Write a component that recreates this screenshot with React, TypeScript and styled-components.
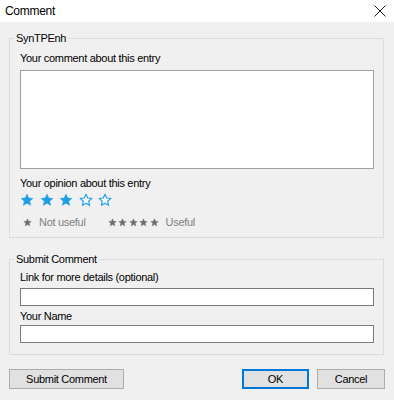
import React from 'react';
import styled, {createGlobalStyle} from 'styled-components';

const GlobalStyle = createGlobalStyle`
  html, body {
    margin: 0;
    padding: 0;
    background: #f0f0f0;
  }
`

const STAR = 'M12 2l2.9 6.6 7.1.7-5.4 4.8 1.6 7-6.2-3.7-6.2 3.7 1.6-7L2 9.3l7.1-.7z'

type StarProps = {
    filled?: boolean
    size: number
    color: string
}
const Star = ({filled, size, color}: StarProps) => (
    <svg width={size} height={size} viewBox="0 0 24 24">
        <path d={STAR} fill={filled ? color : '#ffffff'} stroke={color} strokeWidth={filled ? 1 : 2}
              strokeLinejoin="round"/>
    </svg>
)

export default function App() {
    const rating = 3
    return (
        <Window>
            <GlobalStyle/>
            <TitleBar>
                <Title>Comment</Title>
                <svg width="12" height="12" viewBox="0 0 12 12">
                    <path d="M0.5 0.5L11.5 11.5M11.5 0.5L0.5 11.5" stroke="#1a1a1a" strokeWidth="1"/>
                </svg>
            </TitleBar>
            <Body>
                <Group>
                    <Legend>SynTPEnh</Legend>
                    <Label>Your comment about this entry</Label>
                    <CommentArea/>
                    <Label top={8}>Your opinion about this entry</Label>
                    <StarRow>
                        {[1, 2, 3, 4, 5].map(i => (
                            <Star key={i} filled={i <= rating} size={14} color={'#1e9ee2'}/>
                        ))}
                    </StarRow>
                    <Scale>
                        <Star filled size={9} color={'#6e6e6e'}/>
                        <ScaleText>Not useful</ScaleText>
                        <SmallStars>
                            {[1, 2, 3, 4, 5].map(i => <Star key={i} filled size={9} color={'#6e6e6e'}/>)}
                        </SmallStars>
                        <ScaleText>Useful</ScaleText>
                    </Scale>
                </Group>
                <Group second>
                    <Legend>Submit Comment</Legend>
                    <Label>Link for more details (optional)</Label>
                    <TextInput/>
                    <Label top={4}>Your Name</Label>
                    <TextInput name/>
                </Group>
                <Buttons>
                    <Button width={115}>Submit Comment</Button>
                    <RightButtons>
                        <Button width={67} primary>OK</Button>
                        <Button width={68}>Cancel</Button>
                    </RightButtons>
                </Buttons>
            </Body>
        </Window>
    );
}

const Window = styled.div`
  width: 394px;
  height: 400px;
  background: #f0f0f0;
  font-family: "Liberation Sans", Arial, sans-serif;
  font-size: 11px;
  letter-spacing: -0.3px;
  color: #000;
  overflow: hidden;
`

const TitleBar = styled.div`
  height: 22px;
  background: #ffffff;
  display: flex;
  align-items: center;
  justify-content: space-between;
  padding: 0 8px 0 5px;
`

const Title = styled.span`
  font-size: 12px;
  color: #000;
`

const Body = styled.div`
  padding: 9px 10px 0 9px;
`

const Group = styled.fieldset<{ second?: boolean }>`
  margin: ${p => p.second ? '14px' : '0'} 0 0 0;
  padding: ${p => p.second ? '5px 9px 11px 10px' : '7px 9px 8px 10px'};
  border: 1px solid #dcdcdc;
  display: flex;
  flex-direction: column;
  min-width: 0;
`

const Legend = styled.legend`
  padding: 0 2px;
  margin-left: -6px;
  line-height: 14px;
  font-size: 11px;
`

const Label = styled.div<{ top?: number }>`
  line-height: 13px;
  margin-top: ${p => p.top || 0}px;
`

const CommentArea = styled.div`
  margin-top: 5px;
  height: 99px;
  box-sizing: border-box;
  background: #fff;
  border: 1px solid #a0a0a0;
`

const StarRow = styled.div`
  display: flex;
  gap: 5.5px;
  margin-top: 2px;
  height: 15px;
  align-items: center;
`

const Scale = styled.div`
  display: flex;
  align-items: center;
  margin-top: 9px;
  padding-left: 3px;
  line-height: 13px;
  color: #808080;
`

const ScaleText = styled.span`
  margin-left: 7px;
`

const SmallStars = styled.div`
  display: flex;
  gap: 1.5px;
  margin-left: 22px;
`

const TextInput = styled.div<{ name?: boolean }>`
  margin-top: ${p => p.name ? 2 : 4}px;
  height: 18px;
  box-sizing: border-box;
  background: #fff;
  border: 1px solid #7a7a7a;
`

const Buttons = styled.div`
  display: flex;
  justify-content: space-between;
  margin-top: 14px;
`

const RightButtons = styled.div`
  display: flex;
  gap: 8px;
  margin-right: -1px;
`

const Button = styled.div<{ width: number, primary?: boolean }>`
  width: ${p => p.width}px;
  height: 20px;
  box-sizing: border-box;
  display: flex;
  align-items: center;
  justify-content: center;
  background: #e1e1e1;
  border: 1px solid ${p => p.primary ? '#0078d7' : '#adadad'};
  box-shadow: ${p => p.primary ? 'inset 0 0 0 1px #0078d7' : 'none'};
  color: #000;
`
